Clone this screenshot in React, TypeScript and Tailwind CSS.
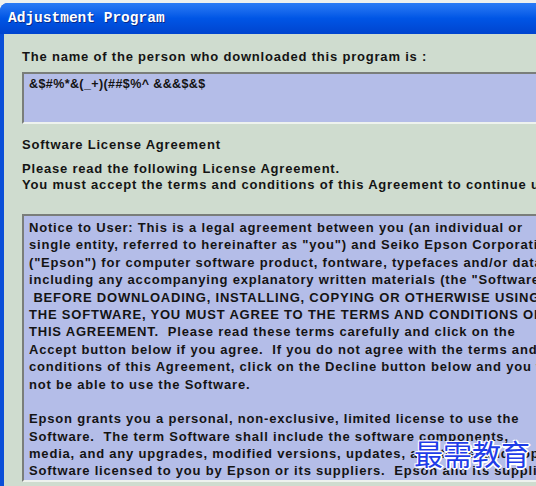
import React from 'react'

const licenseLines = [
  'Notice to User: This is a legal agreement between you (an individual or',
  'single entity, referred to hereinafter as "you") and Seiko Epson Corporation',
  '("Epson") for computer software product, fontware, typefaces and/or data,',
  'including any accompanying explanatory written materials (the "Software").',
  ' BEFORE DOWNLOADING, INSTALLING, COPYING OR OTHERWISE USING',
  'THE SOFTWARE, YOU MUST AGREE TO THE TERMS AND CONDITIONS OF',
  'THIS AGREEMENT.  Please read these terms carefully and click on the',
  'Accept button below if you agree.  If you do not agree with the terms and',
  'conditions of this Agreement, click on the Decline button below and you will',
  'not be able to use the Software.',
  '',
  'Epson grants you a personal, non-exclusive, limited license to use the',
  'Software.  The term Software shall include the software components,',
  'media, and any upgrades, modified versions, updates, additions, and copies of the',
  'Software licensed to you by Epson or its suppliers.  Epson and its suppliers',
]

export default function App() {
  return (
    <div className="relative w-[536px] h-[486px] overflow-hidden bg-[#eef0ee] pt-[3px] font-['Liberation_Sans',Arial,sans-serif]">
      <div className="w-[640px] h-full flex flex-col bg-[#0a4fd8] rounded-tl-[8px]">
        {/* Title bar */}
        <div className="h-[31px] shrink-0 flex items-center pl-[8px] rounded-tl-[8px] bg-linear-to-b from-[#2a7bf5] via-[#0055e5] to-[#0044cf]">
          <span className="font-['Liberation_Mono',monospace] font-bold text-[14.5px] text-white [text-shadow:1px_1px_0_#0a2a8a]">
            Adjustment Program
          </span>
        </div>

        {/* Body */}
        <div className="flex-1 ml-[4px] bg-[#cfdccf] pl-[18px] pt-[15px] text-[13px] leading-[16px] font-bold tracking-[0.8px] text-[#141414] whitespace-nowrap">
          <div>The name of the person who downloaded this program is :</div>

          <div className="mt-[7px] h-[52px] bg-[#b4bde8] border-t-2 border-l-2 border-[#7a7e7a] border-b-2 border-b-[#eef2ee] pl-[5px] pt-[2px] text-[12.5px] tracking-[0.4px]">
            &amp;$#%*&amp;(_+)(##$%^ &amp;&amp;&amp;$&amp;$
          </div>

          <div className="mt-[13px]">Software License Agreement</div>
          <div className="mt-[8px]">Please read the following License Agreement.</div>
          <div>You must accept the terms and conditions of this Agreement to continue using this program.</div>

          <div className="mt-[21px] h-[268px] overflow-hidden bg-[#b4bde8] border-t-2 border-l-2 border-[#7a7e7a] border-b-2 border-b-[#eef2ee] pl-[5px] pt-[3px] leading-[17.4px]">
            {licenseLines.map((line, i) => (
              <div key={i} className="whitespace-pre h-[17.4px]">
                {line}
              </div>
            ))}
          </div>
        </div>
      </div>

      {/* Watermark */}
      <div className="absolute left-[414px] top-[435px] font-['Noto_Sans_CJK_SC',sans-serif] text-[29px] leading-[36px] text-[#1f3de8] [text-shadow:-1px_-1px_0_#fff,1px_-1px_0_#fff,-1px_1px_0_#fff,1px_1px_0_#fff,0_2px_0_#fff,2px_0_0_#fff]">
        最需教育
      </div>
    </div>
  )
}
